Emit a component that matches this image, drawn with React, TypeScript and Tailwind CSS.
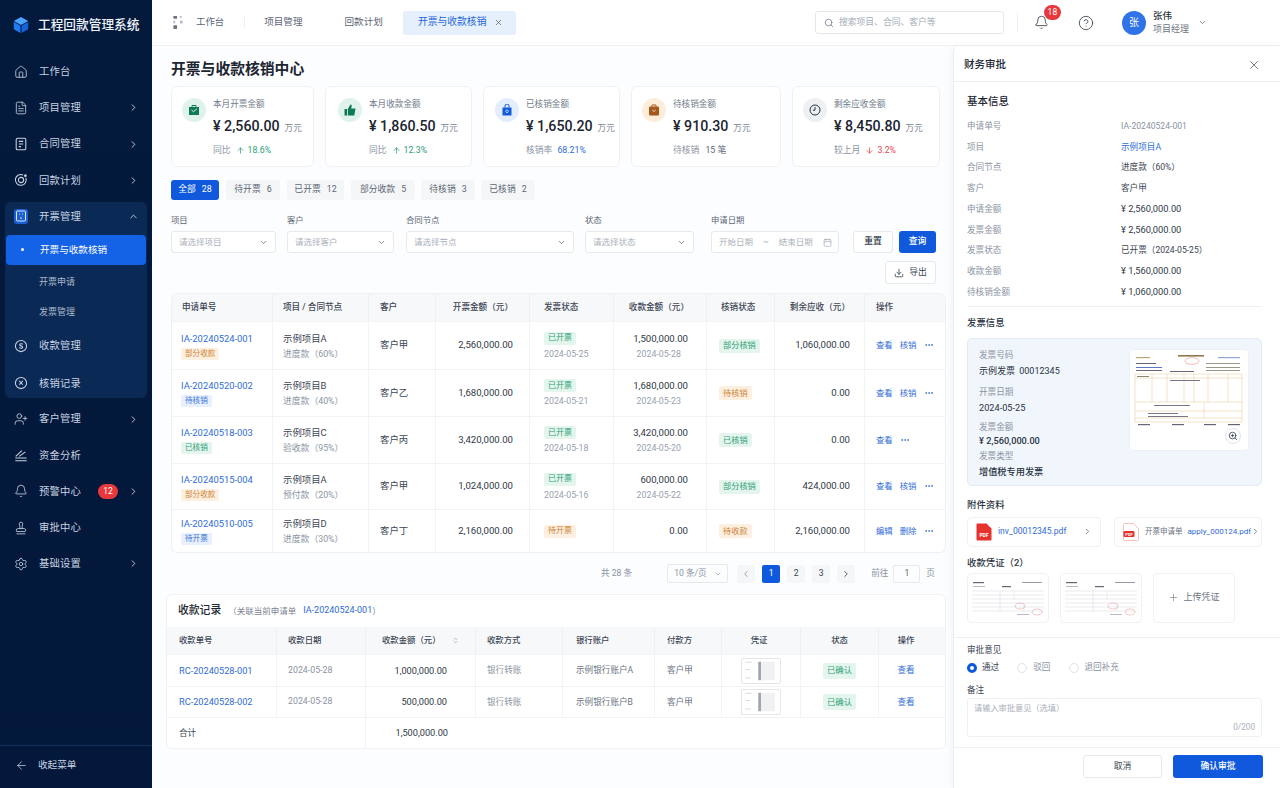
import {
  Bell,
  Calendar,
  ChevronDown,
  ChevronLeft,
  ChevronRight,
  ChevronUp,
  CircleHelp,
  Download,
  Ellipsis,
  FileText,
  Home,
  Plus,
  Search,
  Settings,
  Stamp,
  UserPlus,
  X,
  ZoomIn,
  ArrowUp,
  ArrowDown,
  ChevronsUpDown,
  ArrowLeft,
} from "lucide-react";
import type { ReactNode } from "react";

function Logo() {
  return (
    <svg viewBox="0 0 20 20" className="h-[18px] w-[18px]">
      <polygon points="10,1 18,5.5 10,10 2,5.5" fill="#4aa3ff" />
      <polygon points="2,6.5 9.4,10.8 9.4,19 2,14.6" fill="#1f7bf0" />
      <polygon points="18,6.5 10.6,10.8 10.6,19 18,14.6" fill="#1463d8" />
    </svg>
  );
}

function ContractIcon() {
  return (
    <svg viewBox="0 0 16 16" fill="none" stroke="currentColor" strokeWidth="1.2" className="h-[14px] w-[14px]">
      <rect x="2.5" y="1.5" width="11" height="13" rx="1.5" />
      <path d="M5.5 5h5M5.5 8h5M5.5 11h2.5" />
    </svg>
  );
}

function PlanIcon() {
  return (
    <svg viewBox="0 0 16 16" fill="none" stroke="currentColor" strokeWidth="1.2" className="h-[14px] w-[14px]">
      <path d="M13.5 5.5A6.2 6.2 0 1 1 10.5 2.3" />
      <circle cx="8" cy="8" r="3" />
      <circle cx="13" cy="3" r="0.9" fill="currentColor" />
    </svg>
  );
}

function CoinIcon({ mark }: { mark: string }) {
  return (
    <svg viewBox="0 0 16 16" fill="none" stroke="currentColor" strokeWidth="1.2" className="h-[14px] w-[14px]">
      <circle cx="8" cy="8" r="6.4" />
      <path d={mark} />
    </svg>
  );
}

function AnalysisIcon() {
  return (
    <svg viewBox="0 0 16 16" fill="none" stroke="currentColor" strokeWidth="1.2" className="h-[14px] w-[14px]">
      <path d="M1.5 14.5h13M1.5 11.5h13M2 9.5L9 3M6 9.5L13 4.5" />
    </svg>
  );
}

function MenuBoxIcon() {
  return (
    <span className="flex h-[15px] w-[15px] items-center justify-center rounded-[3px] bg-[#1b5fd0]">
      <svg viewBox="0 0 12 12" fill="none" stroke="#d9e8ff" strokeWidth="1" className="h-[12px] w-[12px]">
        <rect x="1.5" y="1" width="9" height="10" rx="1" />
        <path d="M4 4h.8M7.2 4H8M5 8h2" />
      </svg>
    </span>
  );
}

function NavItem({ icon, label, arrow, badge }: { icon: ReactNode; label: string; arrow?: boolean; badge?: string }) {
  return (
    <div className="flex h-[36.2px] items-center pl-[9px] pr-[8px] text-[#c9d3e2]">
      <span className="flex w-[14px] justify-center">{icon}</span>
      <span className="ml-[11px] text-[10.3px] tracking-[0.2px]">{label}</span>
      {badge && (
        <span className="ml-[17px] flex h-[15px] w-[20px] items-center justify-center rounded-full bg-[#e8383d] text-[8.5px] text-white">
          {badge}
        </span>
      )}
      {arrow && <ChevronRight className="ml-auto h-[11px] w-[11px]" />}
    </div>
  );
}

function Sidebar() {
  const icon = "h-[14px] w-[14px]";
  return (
    <aside className="flex h-full w-[152px] shrink-0 flex-col bg-gradient-to-b from-[#041a3c] to-[#03183a] text-[#c9d3e2]">
      <div className="flex h-[53.6px] shrink-0 items-start pl-[12px] pt-[16px]">
        <Logo />
        <span className="ml-[8px] text-[12.7px] font-medium leading-[18px] text-[#eef3fa]">工程回款管理系统</span>
      </div>
      <nav className="px-[5px]">
        <NavItem icon={<Home className={icon} strokeWidth={1.4} />} label="工作台" />
        <NavItem icon={<FileText className={icon} strokeWidth={1.4} />} label="项目管理" arrow />
        <NavItem icon={<ContractIcon />} label="合同管理" arrow />
        <NavItem icon={<PlanIcon />} label="回款计划" arrow />
        <div className="mt-[3.6px] h-[196px] rounded-[6px] bg-[#0a2a55]">
          <div className="flex h-[28px] items-center pl-[9px] pr-[8px] pt-[1px]">
            <span className="flex w-[14px] justify-center">
              <MenuBoxIcon />
            </span>
            <span className="ml-[11px] text-[10.3px] tracking-[0.2px]">开票管理</span>
            <ChevronUp className="ml-auto h-[11px] w-[11px]" />
          </div>
          <div className="mx-[1px] mt-[5px] flex h-[30px] items-center rounded-[4px] bg-[#1463e6] pl-[15px] text-white">
            <span className="h-[3px] w-[3px] rounded-full bg-white" />
            <span className="ml-[16px] text-[9.6px]">开票与收款核销</span>
          </div>
          <div className="mt-[3px] flex h-[30px] items-center pl-[34px] text-[9px] text-[#a9b6c9]">开票申请</div>
          <div className="flex h-[30px] items-center pl-[34px] text-[9px] text-[#a9b6c9]">发票管理</div>
          <div>
            <NavItem icon={<CoinIcon mark="M10 6c-.6-.8-3.6-1-3.6.6 0 1.6 3.4.9 3.4 2.7 0 1.6-3 1.4-3.8.4" />} label="收款管理" />
          </div>
          <div className="mt-[1px]">
            <NavItem icon={<CoinIcon mark="M6 5.5l4 4.5M10 5.5l-4 4.5" />} label="核销记录" />
          </div>
        </div>
        <div className="mt-[3px]">
          <NavItem icon={<UserPlus className={icon} strokeWidth={1.4} />} label="客户管理" arrow />
          <NavItem icon={<AnalysisIcon />} label="资金分析" />
          <NavItem icon={<Bell className={icon} strokeWidth={1.4} />} label="预警中心" arrow badge="12" />
          <NavItem icon={<Stamp className={icon} strokeWidth={1.4} />} label="审批中心" />
          <NavItem icon={<Settings className={icon} strokeWidth={1.4} />} label="基础设置" arrow />
        </div>
      </nav>
      <div className="mt-auto flex h-[43px] items-center border-t border-[#12305a] pb-[4px] pl-[15px]">
        <ArrowLeft className="h-[13px] w-[13px]" strokeWidth={1.4} />
        <span className="ml-[10px] text-[9.6px]">收起菜单</span>
      </div>
    </aside>
  );
}

function TopBar() {
  return (
    <header className="flex h-[46px] shrink-0 items-center border-b border-[#eef0f4] bg-white text-[#5c6675]">
      <svg viewBox="0 0 10 14" className="ml-[21px] h-[13px] w-[10px]" fill="#6b7280">
        <rect x="0" y="0" width="4" height="3" rx="0.5" />
        <rect x="0" y="5" width="2" height="3" fill="#b6bcc6" />
        <rect x="0" y="10" width="4" height="4" rx="0.5" />
        <rect x="7" y="5" width="3" height="3" fill="#b6bcc6" />
        <rect x="7" y="0" width="2" height="2" fill="#b6bcc6" />
      </svg>
      <span className="ml-[13px] text-[9.4px]">工作台</span>
      <span className="ml-[20px] h-[11px] w-px bg-[#eceef2]" />
      <span className="ml-[19px] text-[9.6px]">项目管理</span>
      <span className="ml-[42px] text-[9.6px]">回款计划</span>
      <div className="ml-[20px] flex h-[24px] w-[113px] items-center rounded-[3px] bg-[#e6f0fc] pl-[15px] text-[#1e66d8]">
        <span className="whitespace-nowrap text-[9.8px]">开票与收款核销</span>
        <X className="ml-auto mr-[13px] h-[9px] w-[9px] text-[#5c6675]" />
      </div>
      <div className="ml-[299px] flex h-[23px] w-[189px] items-center rounded-[3px] border border-[#e3e6eb] pl-[8px] text-[#a4acb8]">
        <Search className="h-[10px] w-[10px] text-[#7a8494]" />
        <span className="ml-[5px] text-[8.8px]">搜索项目、合同、客户等</span>
      </div>
      <span className="ml-[13px] h-[19px] w-px bg-[#eceef2]" />
      <div className="relative ml-[16px] text-[#3c4654]">
        <Bell className="h-[15px] w-[15px]" strokeWidth={1.4} />
        <span className="absolute -right-[12px] -top-[10px] flex h-[15px] w-[17px] items-center justify-center rounded-full bg-[#e8383d] text-[8.5px] text-white">
          18
        </span>
      </div>
      <CircleHelp className="ml-[29px] h-[16px] w-[16px] text-[#3c4654]" strokeWidth={1.3} />
      <span className="ml-[28px] flex h-[24px] w-[24px] items-center justify-center rounded-full bg-[#2f73e6] text-[10px] text-white">
        张
      </span>
      <div className="ml-[7px] flex flex-col">
        <span className="text-[9.5px] font-medium leading-[13px] text-[#2a3442]">张伟</span>
        <span className="mt-px text-[9px] leading-[13px] text-[#6b7482]">项目经理</span>
      </div>
      <ChevronDown className="ml-[9px] h-[9px] w-[9px]" />
    </header>
  );
}

function StatIcon({ kind }: { kind: "invoice" | "thumb" | "bag" | "wallet" | "clock" }) {
  if (kind === "invoice")
    return (
      <span className="flex h-[24px] w-[24px] shrink-0 items-center justify-center rounded-full bg-[#dff3ec]">
        <svg viewBox="0 0 12 12" className="h-[12px] w-[12px]">
          <path d="M1 3h10v8H1z" fill="#0f7a58" />
          <path d="M4 3V1.5h4V3" fill="none" stroke="#0f7a58" />
          <path d="M3.5 6l2 1.7L8.8 5" fill="none" stroke="#dff3ec" strokeWidth="1" />
        </svg>
      </span>
    );
  if (kind === "thumb")
    return (
      <span className="flex h-[24px] w-[24px] shrink-0 items-center justify-center rounded-full bg-[#dff3ec]">
        <svg viewBox="0 0 12 12" className="h-[12px] w-[12px]" fill="#0f7a58">
          <rect x="0.5" y="5" width="2.5" height="6.5" />
          <path d="M3.8 5L6.5.5c1 0 1.5.8 1.2 1.8L7.2 4.5H11.5l-1.2 7H3.8z" />
        </svg>
      </span>
    );
  if (kind === "bag")
    return (
      <span className="flex h-[24px] w-[24px] shrink-0 items-center justify-center rounded-full bg-[#e3edfb]">
        <svg viewBox="0 0 12 12" className="h-[12px] w-[12px]">
          <path d="M1.5 3.5h9v8h-9z" fill="#1259dc" />
          <path d="M4 3.5V2a2 2 0 0 1 4 0v1.5" fill="none" stroke="#1259dc" />
          <circle cx="6" cy="7.3" r="1.3" fill="none" stroke="#dbe8fb" strokeWidth="0.8" />
        </svg>
      </span>
    );
  if (kind === "wallet")
    return (
      <span className="flex h-[24px] w-[24px] shrink-0 items-center justify-center rounded-full bg-[#fdeedb]">
        <svg viewBox="0 0 12 12" className="h-[12px] w-[12px]">
          <rect x="1" y="2.5" width="10" height="9" rx="1" fill="#a5591b" />
          <path d="M4 2.5V1h4v1.5" fill="none" stroke="#a5591b" />
          <path d="M4.3 6l1.7 1.5L7.7 6" fill="none" stroke="#fdeedb" strokeWidth="0.9" />
        </svg>
      </span>
    );
  return (
    <span className="flex h-[24px] w-[24px] shrink-0 items-center justify-center rounded-full bg-[#eef0f3]">
      <svg viewBox="0 0 12 12" className="h-[12px] w-[12px]" fill="none" stroke="#2a3442" strokeWidth="1">
        <circle cx="6" cy="6" r="5" />
        <path d="M6 3v3.2H3.8" />
      </svg>
    </span>
  );
}

type Stat = {
  kind: "invoice" | "thumb" | "bag" | "wallet" | "clock";
  label: string;
  value: string;
  foot: string;
  delta: ReactNode;
  pad: string;
};

const stats: Stat[] = [
  {
    kind: "invoice",
    label: "本月开票金额",
    value: "2,560.00",
    foot: "同比",
    pad: "pl-[10px]",
    delta: (
      <span className="ml-[5px] flex items-center text-[#2f9e78]">
        <ArrowUp className="mr-[3px] h-[9px] w-[9px]" strokeWidth={2} />
        18.6%
      </span>
    ),
  },
  {
    kind: "thumb",
    label: "本月收款金额",
    value: "1,860.50",
    foot: "同比",
    pad: "pl-[12px]",
    delta: (
      <span className="ml-[5px] flex items-center text-[#2f9e78]">
        <ArrowUp className="mr-[3px] h-[9px] w-[9px]" strokeWidth={2} />
        12.3%
      </span>
    ),
  },
  {
    kind: "bag",
    label: "已核销金额",
    value: "1,650.20",
    foot: "核销率",
    pad: "pl-[11px]",
    delta: <span className="ml-[5px] text-[#2f6bd8]">68.21%</span>,
  },
  {
    kind: "wallet",
    label: "待核销金额",
    value: "910.30",
    foot: "待核销",
    pad: "pl-[10px]",
    delta: <span className="ml-[6px] text-[#5c6675]">15 笔</span>,
  },
  {
    kind: "clock",
    label: "剩余应收金额",
    value: "8,450.80",
    foot: "较上月",
    pad: "pl-[10px]",
    delta: (
      <span className="ml-[5px] flex items-center text-[#e5484d]">
        <ArrowDown className="mr-[3px] h-[9px] w-[9px]" strokeWidth={2} />
        3.2%
      </span>
    ),
  },
];

function StatCard({ s }: { s: Stat }) {
  return (
    <div className={`flex h-[81px] rounded-[6px] border border-[#eff1f5] bg-white pt-[11px] ${s.pad}`}>
      <StatIcon kind={s.kind} />
      <div className="ml-[7px]">
        <div className="text-[8.6px] leading-[12px] text-[#717b8a]">{s.label}</div>
        <div className="mt-[7px] flex items-baseline whitespace-pre text-[14.2px] font-medium leading-[18px] text-[#1c2532]">
          ¥ {s.value}
          <span className="ml-[5px] text-[8.6px] font-normal text-[#7b8493]">万元</span>
        </div>
        <div className="mt-[7px] flex items-center text-[8.8px] leading-[12px] text-[#8a94a3]">
          {s.foot}
          {s.delta}
        </div>
      </div>
    </div>
  );
}

const tabs = [
  { label: "全部", n: "28", w: "ml-0 w-[48px]" },
  { label: "待开票", n: "6", w: "ml-[7px] w-[54px]" },
  { label: "已开票", n: "12", w: "ml-[7px] w-[57px]" },
  { label: "部分收款", n: "5", w: "ml-[7px] w-[64px]" },
  { label: "待核销", n: "3", w: "ml-[6px] w-[54px]" },
  { label: "已核销", n: "2", w: "ml-[6px] w-[54px]" },
];

function Field({ label, holder, cls }: { label: string; holder: string; cls: string }) {
  return (
    <div className={cls}>
      <div className="h-[17px] text-[8.4px] leading-[12px] text-[#5c6675]">{label}</div>
      <div className="flex h-[22px] items-center justify-between rounded-[3px] border border-[#e6e9ee] bg-white pl-[7px] pr-[7px]">
        <span className="text-[8.5px] text-[#aab1bc]">{holder}</span>
        <ChevronDown className="h-[9px] w-[9px] text-[#5c6675]" />
      </div>
    </div>
  );
}

type TagTone = "orange" | "blue" | "green";

function Tag({ tone, text, cls }: { tone: TagTone; text: string; cls: string }) {
  const color =
    tone === "orange"
      ? "bg-[#fdf0e1] text-[#cf8334]"
      : tone === "blue"
        ? "bg-[#e7f0fc] text-[#3b74d8]"
        : "bg-[#e3f5ed] text-[#2f9e78]";
  return <span className={`inline-flex items-center rounded-[2px] px-[4px] ${cls} ${color}`}>{text}</span>;
}

const rows = [
  {
    id: "IA-20240524-001", tag: "部分收款", tone: "orange" as TagTone, project: "示例项目A", node: "进度款（60%）", customer: "客户甲",
    amount: "2,560,000.00", status: "已开票", stone: "green" as TagTone, date: "2024-05-25", got: "1,500,000.00", gotDate: "2024-05-28",
    check: "部分核销", ctone: "green" as TagTone, left: "1,060,000.00", ops: ["查看", "核销"], h: "h-[48px]",
  },
  {
    id: "IA-20240520-002", tag: "待核销", tone: "blue" as TagTone, project: "示例项目B", node: "进度款（40%）", customer: "客户乙",
    amount: "1,680,000.00", status: "已开票", stone: "green" as TagTone, date: "2024-05-21", got: "1,680,000.00", gotDate: "2024-05-23",
    check: "待核销", ctone: "orange" as TagTone, left: "0.00", ops: ["查看", "核销"], h: "h-[47px]",
  },
  {
    id: "IA-20240518-003", tag: "已核销", tone: "green" as TagTone, project: "示例项目C", node: "验收款（95%）", customer: "客户丙",
    amount: "3,420,000.00", status: "已开票", stone: "green" as TagTone, date: "2024-05-18", got: "3,420,000.00", gotDate: "2024-05-20",
    check: "已核销", ctone: "green" as TagTone, left: "0.00", ops: ["查看"], h: "h-[47px]",
  },
  {
    id: "IA-20240515-004", tag: "部分收款", tone: "orange" as TagTone, project: "示例项目A", node: "预付款（20%）", customer: "客户甲",
    amount: "1,024,000.00", status: "已开票", stone: "green" as TagTone, date: "2024-05-16", got: "600,000.00", gotDate: "2024-05-22",
    check: "部分核销", ctone: "green" as TagTone, left: "424,000.00", ops: ["查看", "核销"], h: "h-[46px]",
  },
  {
    id: "IA-20240510-005", tag: "待开票", tone: "blue" as TagTone, project: "示例项目D", node: "进度款（30%）", customer: "客户丁",
    amount: "2,160,000.00", status: "待开票", stone: "orange" as TagTone, date: "", got: "0.00", gotDate: "",
    check: "待收款", ctone: "orange" as TagTone, left: "2,160,000.00", ops: ["编辑", "删除"], h: "h-[43px]",
  },
];

const th = "border-r border-[#eef0f4] text-left align-middle text-[8.6px] font-medium text-[#3c4654]";
const td = "border-r border-[#f1f3f6] align-middle";

function InvoiceTable() {
  return (
    <table className="w-[775px] table-fixed border-separate border-spacing-0 overflow-hidden rounded-[6px] border border-[#eef0f4] bg-white">
      <colgroup>
        <col className="w-[101px]" />
        <col className="w-[96px]" />
        <col className="w-[67px]" />
        <col className="w-[94px]" />
        <col className="w-[84px]" />
        <col className="w-[93px]" />
        <col className="w-[68px]" />
        <col className="w-[90px]" />
        <col className="w-[80px]" />
      </colgroup>
      <thead>
        <tr className="h-[27px] bg-[#f7f8fa]">
          <th className={`${th} pl-[10px]`}>申请单号</th>
          <th className={`${th} pl-[10px]`}>项目 / 合同节点</th>
          <th className={`${th} pl-[11px]`}>客户</th>
          <th className={`${th} pr-[16px] text-right`}>开票金额（元）</th>
          <th className={`${th} pl-[14px]`}>发票状态</th>
          <th className={`${th} pr-[17px] text-right`}>收款金额（元）</th>
          <th className={`${th} pl-[14px]`}>核销状态</th>
          <th className={`${th} pr-[14px] text-right`}>剩余应收（元）</th>
          <th className="pl-[11px] text-left text-[8.6px] font-medium text-[#3c4654]">操作</th>
        </tr>
      </thead>
      <tbody>
        {rows.map((r) => (
          <tr key={r.id} className={r.h}>
            <td className={`${td} border-t pl-[9px]`}>
              <div className="text-[9.4px] leading-[13px] text-[#2f6bd8]">{r.id}</div>
              <div className="mt-[3px] flex"><Tag tone={r.tone} text={r.tag} cls="h-[12px] text-[7.6px]" /></div>
            </td>
            <td className={`${td} border-t pl-[10px]`}>
              <div className="text-[9.4px] leading-[14px] text-[#3c4654]">{r.project}</div>
              <div className="mt-[2px] text-[8.8px] leading-[12px] text-[#8a94a3]">{r.node}</div>
            </td>
            <td className={`${td} border-t pl-[11px] text-[9.4px] text-[#3c4654]`}>{r.customer}</td>
            <td className={`${td} border-t pr-[16px] text-right text-[9.6px] text-[#2f3947]`}>{r.amount}</td>
            <td className={`${td} border-t pl-[14px]`}>
              <div className="flex"><Tag tone={r.stone} text={r.status} cls="h-[13px] text-[8px]" /></div>
              {r.date && <div className="mt-[3px] text-[8.8px] leading-[12px] text-[#98a1ae]">{r.date}</div>}
            </td>
            <td className={`${td} border-t text-right`}>
              <div className="pr-[18px] text-[9.6px] leading-[14px] text-[#2f3947]">{r.got}</div>
              {r.gotDate && <div className="mt-[2px] pr-[25px] text-[8.8px] leading-[12px] text-[#98a1ae]">{r.gotDate}</div>}
            </td>
            <td className={`${td} border-t pl-[12px]`}>
              <div className="flex"><Tag tone={r.ctone} text={r.check} cls="h-[14px] text-[8.2px]" /></div>
            </td>
            <td className={`${td} border-t pr-[14px] text-right text-[9.6px] text-[#2f3947]`}>{r.left}</td>
            <td className="border-t border-[#f1f3f6] pl-[11px]">
              <div className="flex items-center text-[8.4px] text-[#2f6bd8]">
                {r.ops.map((o) => (
                  <span key={o} className="mr-[7px]">{o}</span>
                ))}
                <Ellipsis className="h-[10px] w-[10px]" />
              </div>
            </td>
          </tr>
        ))}
      </tbody>
    </table>
  );
}

function Pagination() {
  const box = "flex h-[18px] w-[18px] items-center justify-center rounded-[2px]";
  return (
    <div className="flex h-[41px] items-center text-[8.6px] text-[#8a94a3]">
      <span className="ml-[430px]">共 28 条</span>
      <div className="ml-[35px] flex h-[19px] w-[61px] items-center justify-between rounded-[2px] border border-[#e6e9ee] pl-[6px] pr-[5px]">
        10 条/页
        <ChevronDown className="h-[8px] w-[8px]" />
      </div>
      <span className={`ml-[9px] ${box} bg-[#f5f6f8]`}><ChevronLeft className="h-[10px] w-[10px]" /></span>
      <span className={`ml-[7px] ${box} bg-[#1059dc] text-white`}>1</span>
      <span className={`ml-[7px] ${box} bg-[#f5f6f8] text-[#3c4654]`}>2</span>
      <span className={`ml-[7px] ${box} bg-[#f5f6f8] text-[#3c4654]`}>3</span>
      <span className={`ml-[7px] ${box} bg-[#f5f6f8] text-[#3c4654]`}><ChevronRight className="h-[10px] w-[10px]" /></span>
      <span className="ml-[16px]">前往</span>
      <span className="ml-[5px] flex h-[18px] w-[27px] items-center justify-center rounded-[2px] border border-[#e6e9ee] text-[#5c6675]">1</span>
      <span className="ml-[6px]">页</span>
    </div>
  );
}

function MiniThumb() {
  return (
    <svg viewBox="0 0 40 26" className="mx-auto block h-[26px] w-[40px] rounded-[2px] border border-[#e3e6ea] bg-white">
      <rect x="3" y="3" width="7" height="1" fill="#d5d9de" />
      <rect x="3" y="11" width="5" height="1" fill="#d5d9de" />
      <rect x="3" y="20" width="6" height="1" fill="#d5d9de" />
      <rect x="17" y="3" width="3" height="20" fill="#a2a7ae" />
      <rect x="20" y="3" width="15" height="20" fill="#f0f1f3" />
    </svg>
  );
}

function ReceiptCard() {
  const h = "border-r border-[#eef0f4] text-left text-[8.4px] font-medium text-[#3c4654]";
  const c = "border-r border-[#f1f3f6] border-t text-[8.6px] text-[#6b7482]";
  const receipts = [
    { id: "RC-20240528-001", amount: "1,000,000.00", bank: "示例银行账户A", h: "h-[32px]" },
    { id: "RC-20240528-002", amount: "500,000.00", bank: "示例银行账户B", h: "h-[31px]" },
  ];
  return (
    <div className="-ml-[5px] w-[780px] overflow-hidden rounded-[6px] border border-[#eff1f5] bg-white">
      <div className="flex h-[32px] items-center pl-[11px]">
        <span className="text-[10.8px] font-medium text-[#1c2532]">收款记录</span>
        <span className="ml-[7px] text-[8.5px] text-[#7b8493]">（关联当前申请单</span>
        <span className="ml-[7px] text-[9px] text-[#2f6bd8]">IA-20240524-001</span>
        <span className="text-[8.5px] text-[#7b8493]">）</span>
      </div>
      <table className="w-full table-fixed border-separate border-spacing-0">
        <colgroup>
          <col className="w-[110px]" />
          <col className="w-[89px]" />
          <col className="w-[110px]" />
          <col className="w-[87px]" />
          <col className="w-[92px]" />
          <col className="w-[67px]" />
          <col className="w-[79px]" />
          <col className="w-[78px]" />
          <col className="w-[66px]" />
        </colgroup>
        <thead>
          <tr className="h-[27px] bg-[#f7f8fa]">
            <th className={`${h} pl-[12px]`}>收款单号</th>
            <th className={`${h} pl-[11px]`}>收款日期</th>
            <th className={`${h} pl-[16px]`}>
              <span className="flex items-center">
                收款金额（元）
                <ChevronsUpDown className="ml-[11px] h-[7px] w-[7px] text-[#8a94a3]" />
              </span>
            </th>
            <th className={`${h} pl-[11px]`}>收款方式</th>
            <th className={`${h} pl-[13px]`}>银行账户</th>
            <th className={`${h} pl-[12px]`}>付款方</th>
            <th className={`${h} pr-[4px] !text-center`}>凭证</th>
            <th className={`${h} !text-center`}>状态</th>
            <th className="pr-[12px] text-center text-[8.4px] font-medium text-[#3c4654]">操作</th>
          </tr>
        </thead>
        <tbody>
          {receipts.map((r) => (
            <tr key={r.id} className={r.h}>
              <td className={`${c} pl-[12px] !text-[9.2px] !text-[#2f6bd8]`}>{r.id}</td>
              <td className={`${c} pl-[11px] !text-[8.8px] !text-[#8a94a3]`}>2024-05-28</td>
              <td className={`${c} pr-[28px] text-right !text-[9.2px] !text-[#2f3947]`}>{r.amount}</td>
              <td className={`${c} pl-[11px] !text-[#8a94a3]`}>银行转账</td>
              <td className={`${c} pl-[13px]`}>{r.bank}</td>
              <td className={`${c} pl-[12px]`}>客户甲</td>
              <td className={c}><MiniThumb /></td>
              <td className={`${c} text-center`}>
                <div className="flex justify-center"><Tag tone="green" text="已确认" cls="h-[16px] text-[8.4px]" /></div>
              </td>
              <td className="border-t border-[#f1f3f6] pr-[12px] text-center text-[8.6px] text-[#2f6bd8]">查看</td>
            </tr>
          ))}
          <tr className="h-[31px]">
            <td colSpan={2} className={`${c} pl-[12px] !text-[#3c4654]`}>合计</td>
            <td className="border-t border-[#f1f3f6] pr-[28px] text-right text-[9.2px] text-[#2f3947]">1,500,000.00</td>
            <td colSpan={6} className="border-t border-[#f1f3f6]" />
          </tr>
        </tbody>
      </table>
    </div>
  );
}

function InvoicePreview() {
  return (
    <svg viewBox="0 0 110 74" className="mx-auto mt-[4px] block h-[74px] w-[110px]" fill="none" strokeWidth="0.4">
      <rect x="2" y="3" width="14" height="1.2" fill="#b9a878" />
      <rect x="44" y="1" width="26" height="1.6" fill="#8d7a4c" />
      <ellipse cx="58" cy="7" rx="7" ry="3.4" stroke="#e2574c" />
      <rect x="84" y="3" width="22" height="1.2" fill="#8fa6d8" />
      <rect x="2" y="9" width="20" height="1" fill="#667" />
      <rect x="2" y="13" width="26" height="1" fill="#5a78c4" />
      <rect x="2" y="16" width="26" height="1" fill="#667" />
      <rect x="36" y="17" width="24" height="1" fill="#667" />
      <rect x="72" y="9" width="34" height="1" fill="#998" />
      <rect x="72" y="13" width="34" height="1" fill="#998" />
      <rect x="72" y="16" width="34" height="1" fill="#998" />
      <rect x="1" y="20" width="107" height="48" stroke="#e4b878" />
      <path d="M1 24h107M1 48h107M1 57h107M1 64h107M18 20v28M33 20v28M50 20v28M60 20v28M74 20v28M94 20v28M70 48v16" stroke="#e4b878" />
      <rect x="3" y="22" width="12" height="1" fill="#887" />
      <rect x="36" y="26" width="30" height="1" fill="#778" />
      <rect x="20" y="51" width="36" height="1" fill="#778" />
      <rect x="14" y="59" width="30" height="1" fill="#778" />
      <rect x="14" y="62" width="40" height="1" fill="#778" />
      <rect x="4" y="70" width="12" height="1.2" fill="#667" />
      <rect x="38" y="70" width="12" height="1.2" fill="#667" />
      <rect x="70" y="70" width="12" height="1.2" fill="#667" />
      <rect x="94" y="70" width="12" height="1.2" fill="#667" />
    </svg>
  );
}

function VoucherThumb() {
  return (
    <svg viewBox="0 0 72 36" className="mx-auto mt-[7px] block h-[36px] w-[72px]" fill="none" strokeWidth="0.4">
      <rect x="1" y="1" width="11" height="1.2" fill="#667" />
      <rect x="50" y="1" width="20" height="1" fill="#99a" />
      <rect x="30" y="5" width="9" height="1.2" fill="#667" />
      <rect x="1" y="5" width="12" height="0.8" fill="#aab" />
      <path d="M0 10h72M0 14h72M0 18h72M0 22h72M0 26h72M0 30h72M28 10v20M42 10v8M52 22v8" stroke="#c7ccd4" />
      <ellipse cx="48" cy="25" rx="5" ry="3" stroke="#e07a76" />
      <ellipse cx="65" cy="31" rx="5" ry="3" stroke="#e07a76" />
      <rect x="45" y="33" width="12" height="0.8" fill="#aab" />
    </svg>
  );
}

function PdfIcon({ outline }: { outline?: boolean }) {
  return (
    <svg viewBox="0 0 16 18" className="h-[18px] w-[16px] shrink-0">
      <path
        d="M1.5 0.5h9l5 5v11a1 1 0 0 1-1 1h-13a1 1 0 0 1-1-1v-15a1 1 0 0 1 1-1z"
        fill={outline ? "#fff" : "#e5322d"}
        stroke={outline ? "#f0a5a2" : "none"}
        strokeWidth="0.7"
      />
      {outline && <rect x="0.5" y="8" width="11" height="6" rx="1" fill="#e5322d" />}
      <text x={outline ? 6 : 8} y={outline ? 12.8 : 13.5} textAnchor="middle" fontSize={outline ? 4 : 5} fontWeight="700" fill="#fff" fontFamily="Roboto">
        PDF
      </text>
    </svg>
  );
}

const info = [
  { k: "申请单号", v: "IA-20240524-001", c: "text-[#8a94a3]" },
  { k: "项目", v: "示例项目A", c: "text-[#2f6bd8]" },
  { k: "合同节点", v: "进度款（60%）", c: "text-[#3c4654]" },
  { k: "客户", v: "客户甲", c: "text-[#3c4654]" },
  { k: "申请金额", v: "¥ 2,560,000.00", c: "text-[9.3px] text-[#2f3947]" },
  { k: "发票金额", v: "¥ 2,560,000.00", c: "text-[9.3px] text-[#2f3947]" },
  { k: "发票状态", v: "已开票（2024-05-25）", c: "text-[#3c4654]" },
  { k: "收款金额", v: "¥ 1,560,000.00", c: "text-[9.3px] text-[#2f3947]" },
  { k: "待核销金额", v: "¥ 1,060,000.00", c: "text-[9.3px] text-[#2f3947]" },
];

function SectionTitle({ text, cls }: { text: string; cls: string }) {
  return <div className={`h-[16px] pl-[13px] text-[9.4px] font-medium leading-[16px] text-[#2a3442] ${cls}`}>{text}</div>;
}

function ApprovalPanel() {
  return (
    <section className="flex h-[742px] w-[327px] shrink-0 flex-col rounded-tl-[6px] border-l border-[#eceef2] bg-white shadow-[-2px_0_6px_rgba(15,30,60,0.04)]">
      <div className="flex h-[36px] shrink-0 items-center justify-between border-b border-[#eef0f4] pl-[10px] pr-[19px] pt-[2px]">
        <span className="text-[10.5px] font-medium text-[#1c2532]">财务审批</span>
        <X className="h-[14px] w-[14px] text-[#3c4654]" strokeWidth={1.2} />
      </div>
      <div className="mt-[11px] h-[18px] pl-[13px] text-[10.5px] font-medium leading-[18px] text-[#1c2532]">基本信息</div>
      <div className="mt-[5.2px] pl-[13px]">
        {info.map((i) => (
          <div key={i.k} className="flex h-[20.7px] items-center text-[8.6px]">
            <span className="w-[154px] text-[#8a94a3]">{i.k}</span>
            <span className={i.c}>{i.v}</span>
          </div>
        ))}
      </div>
      <div className="ml-[13px] mt-[3.5px] h-px w-[295px] bg-[#eef0f4]" />
      <SectionTitle text="发票信息" cls="mt-[8px]" />
      <div className="ml-[13px] mt-[7px] flex h-[148px] w-[295px] rounded-[5px] border border-[#e1eaf6] bg-[#f1f6fc] pl-[11px] pt-[8px]">
        <div className="w-[151px]">
          <div className="text-[8.6px] leading-[16px] text-[#8a94a3]">发票号码</div>
          <div className="text-[9px] leading-[16px] text-[#2a3442]">示例发票 <span className="ml-[2px]">00012345</span></div>
          <div className="mt-[5px] text-[8.6px] leading-[16px] text-[#8a94a3]">开票日期</div>
          <div className="text-[9.2px] leading-[16px] text-[#2a3442]">2024-05-25</div>
          <div className="mt-[3px] text-[8.6px] leading-[16px] text-[#8a94a3]">发票金额</div>
          <div className="-mt-[2px] text-[9.2px] font-medium leading-[15px] text-[#2a3442]">¥ 2,560,000.00</div>
          <div className="mt-[1px] text-[8.6px] leading-[15px] text-[#8a94a3]">发票类型</div>
          <div className="text-[9.2px] font-medium leading-[15px] text-[#2a3442]">增值税专用发票</div>
        </div>
        <div className="relative mt-[3px] h-[100px] w-[118px] rounded-[3px] bg-white shadow-[0_0_2px_rgba(15,30,60,0.08)]">
          <InvoicePreview />
          <span className="absolute bottom-[6px] right-[7px] flex h-[16px] w-[16px] items-center justify-center rounded-full border border-[#e1e4e9] bg-white">
            <ZoomIn className="h-[10px] w-[10px] text-[#3c4654]" />
          </span>
        </div>
      </div>
      <SectionTitle text="附件资料" cls="mt-[11px]" />
      <div className="mt-[4px] flex pl-[13px]">
        <div className="flex h-[30px] w-[134px] items-center rounded-[4px] border border-[#eff1f5] pl-[8px] pr-[8px]">
          <PdfIcon />
          <span className="ml-[6px] whitespace-nowrap text-[8.6px] text-[#2f6bd8]">inv_00012345.pdf</span>
          <ChevronRight className="ml-auto h-[9px] w-[9px] text-[#5c6675]" />
        </div>
        <div className="ml-[13px] flex h-[30px] w-[148px] items-center rounded-[4px] border border-[#eff1f5] pl-[8px] pr-[5px]">
          <PdfIcon outline />
          <span className="ml-[6px] whitespace-nowrap text-[7.5px] text-[#6b7482]">开票申请单</span>
          <span className="ml-[5px] whitespace-nowrap text-[8px] text-[#2f6bd8]">apply_000124.pdf</span>
          <ChevronRight className="ml-auto h-[9px] w-[9px] shrink-0 text-[#5c6675]" />
        </div>
      </div>
      <SectionTitle text="收款凭证（2）" cls="mt-[8px]" />
      <div className="mt-[2px] flex gap-[11px] pl-[13px]">
        <div className="h-[50px] w-[82px] rounded-[4px] border border-[#eff1f5]"><VoucherThumb /></div>
        <div className="h-[50px] w-[82px] rounded-[4px] border border-[#eff1f5]"><VoucherThumb /></div>
        <div className="flex h-[50px] w-[82px] items-center justify-center rounded-[4px] border border-[#eff1f5] text-[9px] text-[#6b7482]">
          <Plus className="mr-[4px] h-[11px] w-[11px]" strokeWidth={1.3} />
          上传凭证
        </div>
      </div>
      <div className="mt-[14px] h-px bg-[#eef0f4]" />
      <div className="mt-[4px] h-[16px] pl-[13px] text-[8.6px] leading-[16px] text-[#3c4654]">审批意见</div>
      <div className="mt-[2px] flex h-[16px] items-center pl-[13px] text-[8.6px] text-[#6b7482]">
        <span className="h-[10px] w-[10px] rounded-full border-[3px] border-[#1059dc] bg-white" />
        <span className="ml-[5px] text-[#3c4654]">通过</span>
        <span className="ml-[18px] h-[10px] w-[10px] rounded-full border border-[#dfe3e8]" />
        <span className="ml-[6px] text-[#8a94a3]">驳回</span>
        <span className="ml-[19px] h-[10px] w-[10px] rounded-full border border-[#dfe3e8]" />
        <span className="ml-[5px] text-[#8a94a3]">退回补充</span>
      </div>
      <div className="mt-[6px] h-[16px] pl-[13px] text-[8.6px] leading-[16px] text-[#3c4654]">备注</div>
      <div className="ml-[13px] flex h-[39px] w-[295px] flex-col justify-between rounded-[3px] border border-[#eef0f4] px-[6px] py-[3px] text-[8.2px] text-[#aab1bc]">
        <span>请输入审批意见（选填）</span>
        <span className="self-end">0/200</span>
      </div>
      <div className="mt-[10px] h-px bg-[#eef0f4]" />
      <div className="mt-[7px] flex justify-end pr-[17px]">
        <button className="h-[23px] w-[79px] rounded-[3px] border border-[#e6e9ee] bg-white text-[8.8px] text-[#3c4654]">取消</button>
        <button className="ml-[11px] h-[23px] w-[90px] rounded-[3px] bg-[#1059dc] text-[8.8px] font-medium text-white">确认审批</button>
      </div>
    </section>
  );
}

export default function App() {
  return (
    <div className="flex h-[788px] w-[1280px] overflow-hidden bg-[#fcfdfe] font-['Roboto','Noto_Sans_CJK_SC',sans-serif]">
      <Sidebar />
      <div className="flex min-w-0 flex-1 flex-col">
        <TopBar />
        <div className="flex min-h-0 flex-1">
          <main className="w-[801px] shrink-0 pl-[19px]">
            <h1 className="h-[40px] pt-[14px] text-[14.8px] font-semibold leading-[18px] text-[#1c2532]">开票与收款核销中心</h1>
            <div className="grid grid-cols-[143px_147px_137px_150px_148px] gap-[11px]">
              {stats.map((s) => (
                <StatCard key={s.label} s={s} />
              ))}
            </div>
            <div className="mt-[13px] flex h-[20px]">
              {tabs.map((t, i) => (
                <span
                  key={t.label}
                  className={`flex h-[20px] items-center justify-center gap-[6px] rounded-[3px] text-[8.8px] ${t.w} ${
                    i === 0 ? "bg-[#1059dc] text-white" : "bg-[#f5f6f8] text-[#5c6675]"
                  }`}
                >
                  {t.label}
                  <span>{t.n}</span>
                </span>
              ))}
            </div>
            <div className="mt-[14px] flex items-end">
              <Field label="项目" holder="请选择项目" cls="w-[105px]" />
              <Field label="客户" holder="请选择客户" cls="ml-[11px] w-[107px]" />
              <Field label="合同节点" holder="请选择节点" cls="ml-[12px] w-[168px]" />
              <Field label="状态" holder="请选择状态" cls="ml-[11px] w-[109px]" />
              <div className="ml-[17px] w-[128px]">
                <div className="h-[17px] text-[8.4px] leading-[12px] text-[#5c6675]">申请日期</div>
                <div className="flex h-[22px] items-center rounded-[3px] border border-[#e6e9ee] bg-white pl-[7px] pr-[6px] text-[8.5px] text-[#aab1bc]">
                  开始日期
                  <span className="mx-[10px]">~</span>
                  结束日期
                  <Calendar className="ml-auto h-[9px] w-[9px]" />
                </div>
              </div>
              <button className="ml-[14px] h-[22px] w-[40px] rounded-[3px] border border-[#e6e9ee] bg-white text-[8.8px] font-medium text-[#2a3442]">重置</button>
              <button className="ml-[6px] h-[22px] w-[37px] rounded-[3px] bg-[#1059dc] text-[8.8px] font-medium text-white">查询</button>
            </div>
            <div className="mt-[8px] flex justify-end pr-[17px]">
              <button className="flex h-[23px] w-[51px] items-center justify-center gap-[5px] rounded-[3px] border border-[#e6e9ee] bg-white text-[8.8px] text-[#3c4654]">
                <Download className="h-[10px] w-[10px]" />
                导出
              </button>
            </div>
            <div className="mt-[9px]">
              <InvoiceTable />
            </div>
            <Pagination />
            <ReceiptCard />
          </main>
          <ApprovalPanel />
        </div>
      </div>
    </div>
  );
}
